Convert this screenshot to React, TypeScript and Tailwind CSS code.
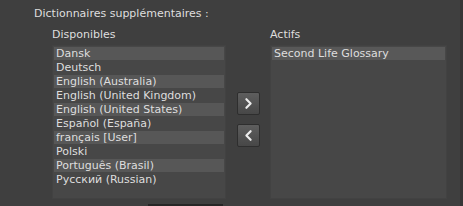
import { ChevronLeft, ChevronRight } from 'lucide-react'

const available = [
  'Dansk',
  'Deutsch',
  'English (Australia)',
  'English (United Kingdom)',
  'English (United States)',
  'Español (España)',
  'français [User]',
  'Polski',
  'Português (Brasil)',
  'Русский (Russian)',
]

const active = ['Second Life Glossary']

function ListBox({ items, striped }: { items: string[]; striped?: boolean }) {
  return (
    <div className="h-[154px] bg-[#474747] border border-[#424242] px-px pt-px">
      {items.map((item, i) => (
        <div key={item} className="h-[14px]">
          <div
            className={`h-[13px] pl-[2px] leading-[13px] whitespace-nowrap ${
              striped ? (i % 2 === 0 ? 'bg-[#575757]' : '') : 'bg-[#585858]'
            }`}
          >
            {item}
          </div>
        </div>
      ))}
    </div>
  )
}

function ArrowButton({ dir }: { dir: 'left' | 'right' }) {
  const Icon = dir === 'right' ? ChevronRight : ChevronLeft
  return (
    <button className="w-[23px] h-[23px] rounded-[2px] border border-[#2e2e2e] bg-gradient-to-b from-[#5e5e5e] to-[#474747] flex items-center justify-center text-[#ececec]">
      <Icon className="w-[17px] h-[17px]" strokeWidth={3} />
    </button>
  )
}

export default function App() {
  return (
    <div
      className="relative w-[463px] h-[206px] overflow-hidden bg-[#3f3f3f] text-[#dedede] text-[11px]"
      style={{ fontFamily: '"DejaVu Sans", sans-serif' }}
    >
      <div className="pl-[34px] pt-[7px] leading-[13px]">Dictionnaires supplémentaires :</div>

      <div className="flex pl-[52px] pt-[8px]">
        <div className="w-[174px]">
          <div className="h-[17px] leading-[13px]">Disponibles</div>
          <ListBox items={available} striped />
        </div>

        <div className="w-[44px] flex flex-col items-center pt-[64px] gap-[9px]">
          <ArrowButton dir="right" />
          <ArrowButton dir="left" />
        </div>

        <div className="w-[177px]">
          <div className="h-[17px] leading-[13px]">Actifs</div>
          <ListBox items={active} />
        </div>
      </div>

      <div className="absolute right-0 top-0 w-[3px] h-full bg-[#363636]" />
      <div className="absolute left-[148px] bottom-0 w-[75px] h-[2px] bg-[#262626]" />
    </div>
  )
}
